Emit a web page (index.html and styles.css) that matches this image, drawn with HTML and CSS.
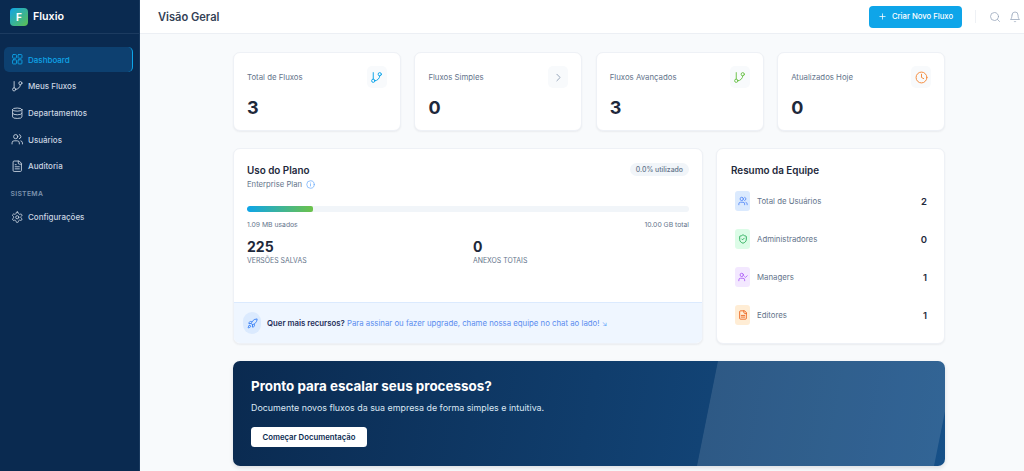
FILE: index.html
```html
<!DOCTYPE html>
<html lang="pt-BR">
<head>
<meta charset="utf-8">
<title>Fluxio</title>
<link rel="stylesheet" href="styles.css">
</head>
<body>
<div class="app">
  <aside class="sidebar">
    <div class="brand"><span class="logo">F</span><span class="brand-name">Fluxio</span></div>
    <nav class="nav">
      <a class="nav-item active"><svg class="nav-icon" viewBox="0 0 24 24"><rect x="3" y="3" width="7.5" height="7" rx="1.500"/><rect x="13.500" y="3" width="7.500" height="7" rx="1.500"/><rect x="3" y="13" width="7.500" height="8" rx="1.500"/><rect x="13.500" y="13" width="7.500" height="8" rx="1.500"/></svg>Dashboard</a>
      <a class="nav-item"><svg class="nav-icon" viewBox="0 0 24 24"><path d="M6 3v12"/><circle cx="18" cy="6" r="3"/><circle cx="6" cy="18" r="3"/><path d="M18 9a9 9 0 0 1-9 9"/></svg>Meus Fluxos</a>
      <a class="nav-item"><svg class="nav-icon" viewBox="0 0 24 24"><ellipse cx="12" cy="5" rx="9" ry="3"/><path d="M3 5v14a9 3 0 0 0 18 0V5"/><path d="M3 12a9 3 0 0 0 18 0"/></svg>Departamentos</a>
      <a class="nav-item"><svg class="nav-icon" viewBox="0 0 24 24"><path d="M16 21v-2a4 4 0 0 0-4-4H6a4 4 0 0 0-4 4v2"/><circle cx="9" cy="7" r="4"/><path d="M22 21v-2a4 4 0 0 0-3-3.870"/><path d="M16 3.130a4 4 0 0 1 0 7.750"/></svg>Usuários</a>
      <a class="nav-item"><svg class="nav-icon" viewBox="0 0 24 24"><path d="M15 2H6a2 2 0 0 0-2 2v16a2 2 0 0 0 2 2h12a2 2 0 0 0 2-2V7Z"/><path d="M14 2v4a2 2 0 0 0 2 2h4"/><path d="M10 9H8"/><path d="M16 13H8"/><path d="M16 17H8"/></svg>Auditoria</a>
      <div class="nav-section">SISTEMA</div>
      <a class="nav-item"><svg class="nav-icon" viewBox="0 0 24 24"><path d="M12.220 2h-.44a2 2 0 0 0-2 2v.18a2 2 0 0 1-1 1.730l-.43.25a2 2 0 0 1-2 0l-.15-.08a2 2 0 0 0-2.730.73l-.22.38a2 2 0 0 0 .73 2.730l.15.1a2 2 0 0 1 1 1.720v.51a2 2 0 0 1-1 1.740l-.15.09a2 2 0 0 0-.73 2.730l.22.38a2 2 0 0 0 2.730.73l.15-.08a2 2 0 0 1 2 0l.43.25a2 2 0 0 1 1 1.730V20a2 2 0 0 0 2 2h.44a2 2 0 0 0 2-2v-.18a2 2 0 0 1 1-1.730l.43-.25a2 2 0 0 1 2 0l.15.08a2 2 0 0 0 2.730-.73l.22-.39a2 2 0 0 0-.73-2.730l-.15-.08a2 2 0 0 1-1-1.740v-.5a2 2 0 0 1 1-1.740l.15-.09a2 2 0 0 0 .73-2.730l-.22-.38a2 2 0 0 0-2.730-.73l-.15.08a2 2 0 0 1-2 0l-.43-.25a2 2 0 0 1-1-1.730V4a2 2 0 0 0-2-2z"/><circle cx="12" cy="12" r="3"/></svg>Configurações</a>
    </nav>
  </aside>
  <div class="main">
    <header class="topbar">
      <h1 class="page-title">Visão Geral</h1>
      <div class="top-actions">
        <button class="primary-btn"><svg class="btn-icon" viewBox="0 0 24 24"><path d="M12 5v14M5 12h14"/></svg>Criar Novo Fluxo</button>
        <span class="divider"></span>
        <svg class="top-icon" viewBox="0 0 24 24"><circle cx="11" cy="11" r="8"/><path d="m21 21-4.300-4.300"/></svg>
        <svg class="top-icon" viewBox="0 0 24 24"><path d="M6 8a6 6 0 0 1 12 0c0 7 3 9 3 9H3s3-2 3-9M10.300 21a2 2 0 0 0 3.400 0"/></svg>
      </div>
    </header>
    <main class="content">
      <section class="stats">
        <article class="stat">
          <div class="stat-head"><span class="stat-label">Total de Fluxos</span><span class="stat-icon blue"><svg viewBox="0 0 24 24"><path d="M6 3v12"/><circle cx="18" cy="6" r="3"/><circle cx="6" cy="18" r="3"/><path d="M18 9a9 9 0 0 1-9 9"/></svg></span></div>
          <div class="stat-value">3</div>
        </article>
        <article class="stat">
          <div class="stat-head"><span class="stat-label">Fluxos Simples</span><span class="stat-icon gray"><svg viewBox="0 0 24 24"><path d="m9 6 6 6-6 6"/></svg></span></div>
          <div class="stat-value">0</div>
        </article>
        <article class="stat">
          <div class="stat-head"><span class="stat-label">Fluxos Avançados</span><span class="stat-icon green"><svg viewBox="0 0 24 24"><path d="M6 3v12"/><circle cx="18" cy="6" r="3"/><circle cx="6" cy="18" r="3"/><path d="M18 9a9 9 0 0 1-9 9"/></svg></span></div>
          <div class="stat-value">3</div>
        </article>
        <article class="stat">
          <div class="stat-head"><span class="stat-label">Atualizados Hoje</span><span class="stat-icon orange"><svg viewBox="0 0 24 24"><circle cx="12" cy="12" r="10"/><path d="M12 6v6l4 2"/></svg></span></div>
          <div class="stat-value">0</div>
        </article>
      </section>
      <section class="panels">
        <article class="card plan">
          <div class="plan-body">
            <div class="plan-head">
              <div>
                <h2 class="card-title">Uso do Plano</h2>
                <div class="plan-name">Enterprise Plan <svg class="info" viewBox="0 0 24 24"><circle cx="12" cy="12" r="10"/><path d="M12 16v-5M12 8h.01"/></svg></div>
              </div>
              <span class="pill">0.0% utilizado</span>
            </div>
            <div class="progress"><div class="progress-fill"></div></div>
            <div class="progress-labels"><span>1.09 MB usados</span><span>10.00 GB total</span></div>
            <div class="plan-stats">
              <div><div class="plan-num">225</div><div class="plan-cap">VERSÕES SALVAS</div></div>
              <div><div class="plan-num">0</div><div class="plan-cap">ANEXOS TOTAIS</div></div>
            </div>
          </div>
          <div class="plan-foot">
            <span class="foot-icon"><svg viewBox="0 0 24 24"><path d="M4.500 16.500c-1.500 1.260-2 5-2 5s3.740-.5 5-2c.71-.84.7-2.130-.09-2.910a2.180 2.180 0 0 0-2.910-.09z"/><path d="m12 15-3-3a22 22 0 0 1 2-3.950A12.880 12.880 0 0 1 22 2c0 2.720-.78 7.500-6 11a22.350 22.350 0 0 1-4 2z"/><path d="M9 12H4s.55-3.030 2-4c1.620-1.080 5 0 5 0"/><path d="M12 15v5s3.030-.55 4-2c1.080-1.620 0-5 0-5"/></svg></span>
            <p class="foot-text"><strong>Quer mais recursos?</strong> Para assinar ou fazer upgrade, chame nossa equipe no chat ao lado! <span class="arrow">↘</span></p>
          </div>
        </article>
        <article class="card team">
          <h2 class="card-title">Resumo da Equipe</h2>
          <ul class="team-list">
            <li class="team-row"><span class="team-icon t-blue"><svg viewBox="0 0 24 24"><path d="M16 21v-2a4 4 0 0 0-4-4H6a4 4 0 0 0-4 4v2"/><circle cx="9" cy="7" r="4"/><path d="M22 21v-2a4 4 0 0 0-3-3.870"/><path d="M16 3.130a4 4 0 0 1 0 7.750"/></svg></span><span class="team-label">Total de Usuários</span><span class="team-val">2</span></li>
            <li class="team-row"><span class="team-icon t-green"><svg viewBox="0 0 24 24"><path d="M20 13c0 5-3.500 7.500-7.660 8.950a1 1 0 0 1-.67-.01C7.500 20.500 4 18 4 13V6a1 1 0 0 1 1-1c2 0 4.500-1.200 6.240-2.720a1.170 1.170 0 0 1 1.520 0C14.510 3.810 17 5 19 5a1 1 0 0 1 1 1z"/><path d="m9 12 2 2 4-4"/></svg></span><span class="team-label">Administradores</span><span class="team-val">0</span></li>
            <li class="team-row"><span class="team-icon t-purple"><svg viewBox="0 0 24 24"><path d="M16 21v-2a4 4 0 0 0-4-4H6a4 4 0 0 0-4 4v2"/><circle cx="9" cy="7" r="4"/><path d="m16 11 2 2 4-4"/></svg></span><span class="team-label">Managers</span><span class="team-val">1</span></li>
            <li class="team-row"><span class="team-icon t-orange"><svg viewBox="0 0 24 24"><path d="M15 2H6a2 2 0 0 0-2 2v16a2 2 0 0 0 2 2h12a2 2 0 0 0 2-2V7Z"/><path d="M14 2v4a2 2 0 0 0 2 2h4"/><path d="M8 13h8"/><path d="M8 17h8"/></svg></span><span class="team-label">Editores</span><span class="team-val">1</span></li>
          </ul>
        </article>
      </section>
      <section class="banner">
        <h2 class="banner-title">Pronto para escalar seus processos?</h2>
        <p class="banner-text">Documente novos fluxos da sua empresa de forma simples e intuitiva.</p>
        <button class="banner-btn">Começar Documentação</button>
      </section>
    </main>
  </div>
</div>
</body>
</html>
```
FILE: styles.css
```css
* { box-sizing: border-box; }
html, body { margin: 0; height: 100%; }
body { font-family: Inter, "Liberation Sans", sans-serif; background: #f8fafc; color: #1e293b; overflow: hidden; }
svg { fill: none; stroke: currentColor; stroke-width: 2; stroke-linecap: round; stroke-linejoin: round; }

.app { display: flex; height: 471px; }

.sidebar { width: 140px; flex: none; background: #0a2a50; color: #cbd5e1; border-right: 1px solid #1a3a5f; }
.brand { height: 34px; display: flex; align-items: center; gap: 5px; padding-left: 10px; border-bottom: 1px solid #1c3b60; }
.logo { width: 18px; height: 18px; border-radius: 4px; background: linear-gradient(135deg, #0ea5e9, #5fc04e); color: #fff; font-size: 10px; font-weight: 700; display: flex; align-items: center; justify-content: center; }
.brand-name { color: #fff; font-size: 10.700px; font-weight: 600; }
.nav { display: flex; flex-direction: column; padding: 13px 6px 0 4px; }
.nav-item { height: 25px; margin-bottom: 1.700px; display: flex; align-items: center; gap: 5px; padding-left: 6.500px; border-radius: 5px; font-size: 8px; font-weight: 500; color: #cbd5e1; }
.nav-icon { width: 12.500px; height: 12.500px; flex: none; stroke-width: 1.700; }
.nav-item.active { background: #0d4070; color: #0ea5e9; border-right: 1.500px solid #0ea5e9; }
.nav-section { margin: 8.500px 0 7px 6.500px; font-size: 6.800px; font-weight: 600; letter-spacing: .3px; color: #7d93ad; }

.main { flex: 1; min-width: 0; display: flex; flex-direction: column; }
.topbar { height: 34px; flex: none; background: #fff; border-bottom: 1px solid #eceff4; display: flex; align-items: center; justify-content: space-between; padding: 0 3px 0 18px; }
.page-title { margin: 0; font-size: 11.100px; font-weight: 600; color: #334155; }
.top-actions { display: flex; align-items: center; }
.primary-btn { height: 22px; width: 93px; border: 0; border-radius: 4px; background: #0ea5e9; color: #fff; font: 500 7.700px Inter, sans-serif; display: flex; align-items: center; justify-content: center; gap: 5px; }
.btn-icon { width: 9px; height: 9px; }
.divider { width: 1px; height: 13px; background: #eef1f5; margin: 0 13px; }
.top-icon { width: 12px; height: 12px; color: #94a3b8; stroke-width: 1.500; margin-left: 8px; }
.divider + .top-icon { margin-left: 0; }

.content { flex: 1; min-height: 0; padding: 18px 79px 0 93px; display: flex; flex-direction: column; }
.stats { display: grid; grid-template-columns: repeat(4, 1fr); gap: 13.500px; }
.stat { height: 79px; background: #fff; border: 1px solid #eef1f6; border-radius: 7px; box-shadow: 0 1px 2px rgba(15, 23, 42, .06); padding: 13px 13px 0; }
.stat-head { display: flex; justify-content: space-between; align-items: flex-start; }
.stat-label { font-size: 7.800px; color: #64748b; margin-top: 5.500px; }
.stat-icon { width: 20px; height: 22px; border-radius: 5px; background: #f8fafc; display: flex; align-items: center; justify-content: center; }
.stat-icon svg { width: 13px; height: 13px; stroke-width: 1.800; }
.blue { color: #0ea5e9; } .gray { color: #94a3b8; } .green { color: #6cc24a; } .orange { color: #f58b3c; }
.stat-value { font-size: 18px; font-weight: 700; color: #1e293b; margin-top: 9px; line-height: 22px; }

.panels { display: flex; gap: 13px; margin-top: 17px; height: 196px; }
.card { background: #fff; border: 1px solid #eef1f6; border-radius: 7px; box-shadow: 0 1px 2px rgba(15, 23, 42, .06); }
.plan { width: 470px; flex: none; display: flex; flex-direction: column; overflow: hidden; }
.plan-body { flex: 1; padding: 14px 13px 0; }
.plan-head { display: flex; justify-content: space-between; align-items: flex-start; }
.card-title { margin: 0; font-size: 9.900px; font-weight: 600; color: #1e293b; line-height: 14px; }
.plan-name { display: flex; align-items: center; gap: 4px; font-size: 7.700px; color: #64748b; margin-top: 2px; height: 11px; }
.info { width: 9px; height: 9px; color: #60a5fa; stroke-width: 1.800; }
.pill { background: #f1f5f9; border-radius: 7px; padding: 0 6px; height: 13px; line-height: 13px; font-size: 6.900px; font-weight: 500; color: #64748b; }
.progress { height: 6px; background: #f1f5f9; border-radius: 3px; margin-top: 16px; overflow: hidden; }
.progress-fill { width: 15%; height: 100%; background: linear-gradient(90deg, #0ea5e9, #6cc24a); border-radius: 2px; }
.progress-labels { display: flex; justify-content: space-between; font-size: 6.800px; color: #64748b; margin-top: 8px; line-height: 9px; }
.plan-stats { display: grid; grid-template-columns: 226px 1fr; margin-top: 10px; }
.plan-num { font-size: 14px; font-weight: 700; line-height: 16px; color: #1e293b; }
.plan-cap { font-size: 6.900px; color: #64748b; margin-top: 1px; line-height: 10px; }
.plan-foot { height: 41px; flex: none; background: #eff6ff; border-top: 1px solid #dbeafe; display: flex; align-items: center; gap: 6px; padding-left: 9px; }
.foot-icon { width: 18px; height: 22px; border-radius: 9px; background: #dbeafe; color: #3b82f6; display: flex; align-items: center; justify-content: center; }
.foot-icon svg { width: 11px; height: 11px; stroke-width: 2; }
.foot-text { margin: 0; font-size: 7.800px; color: #5b8def; }
.foot-text strong { font-weight: 600; color: #1e2f5a; }
.arrow { font-size: 7px; color: #60a5fa; }

.team { flex: 1; min-width: 0; padding: 14px 13px 0 14px; }
.team-list { list-style: none; margin: 14px 0 0; padding: 0 4px; display: flex; flex-direction: column; gap: 18px; }
.team-row { display: flex; align-items: center; height: 20px; }
.team-icon { width: 15px; height: 20px; border-radius: 3px; display: flex; align-items: center; justify-content: center; flex: none; }
.team-icon svg { width: 10px; height: 10px; stroke-width: 2; }
.t-blue { background: #dbeafe; color: #4f86f7; } .t-green { background: #dcfce7; color: #16a34a; } .t-purple { background: #f3e8ff; color: #a855f7; } .t-orange { background: #ffedd5; color: #ea580c; }
.team-label { flex: 1; margin-left: 7px; font-size: 7.800px; color: #64748b; }
.team-val { font-size: 9.500px; font-weight: 600; color: #1e293b; }

.banner { position: relative; overflow: hidden; height: 105px; margin-top: 17px; border-radius: 7px; padding: 17px 18px 0; background: linear-gradient(100deg, #0a2a50, #165088); box-shadow: 0 2px 4px rgba(15, 23, 42, .12); color: #fff; }
.banner::after { content: ""; position: absolute; top: 0; bottom: 0; left: 464px; right: 0; background: rgba(255, 255, 255, .12); clip-path: polygon(21px 0, 100% 0, 100% 48%, 237px 100%, 0 100%); }
.banner-title { margin: 0; font-size: 13.400px; font-weight: 700; line-height: 17px; }
.banner-text { margin: 7px 0 0; font-size: 8.900px; line-height: 11px; color: #dbe7f3; }
.banner-btn { display: block; margin-top: 14px; width: 116px; height: 20px; border: 0; border-radius: 3.500px; background: #fff; color: #0a2a50; font: 600 7.750px Inter, sans-serif; }
```
